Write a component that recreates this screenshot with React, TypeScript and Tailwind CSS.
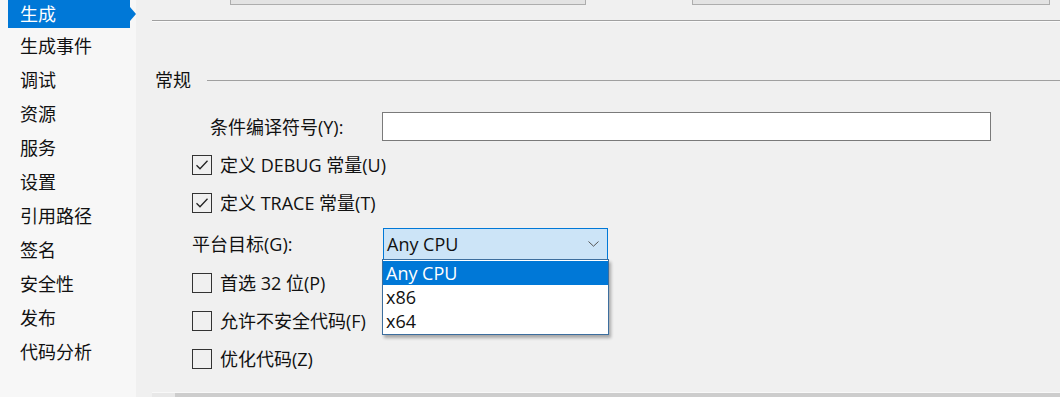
import React from "react";

const navItems = ["生成事件", "调试", "资源", "服务", "设置", "引用路径", "签名", "安全性", "发布", "代码分析"];

function CheckBox({ checked }: { checked?: boolean }) {
  return (
    <div className="w-[20px] h-[20px] border border-[#333333] bg-[#f0f0f0] flex items-center justify-center shrink-0">
      {checked && (
        <svg width="16" height="16" viewBox="0 0 16 16">
          <path d="M2.5 8.2 L6 11.7 L13.5 3.8" fill="none" stroke="#222" strokeWidth="1.3" />
        </svg>
      )}
    </div>
  );
}

function CheckRow({ label, checked, className }: { label: string; checked?: boolean; className: string }) {
  return (
    <div className={"h-[24px] flex items-center pl-[56px] " + className}>
      <CheckBox checked={checked} />
      <span className="ml-[8px]">{label}</span>
    </div>
  );
}

export default function App() {
  return (
    <div
      className="w-[1060px] h-[397px] flex overflow-hidden bg-[#f0f0f0] text-[18px] text-[#111] leading-none"
      style={{ fontFamily: '"Open Sans", "Noto Sans CJK SC", sans-serif' }}
    >
      {/* left nav */}
      <aside className="w-[136px] shrink-0 bg-[#f7f7f7] flex flex-col">
        <div className="h-[29px]">
          <div className="relative ml-[8px] w-[122px] h-[28px] bg-[#0078d7] text-white flex items-center pl-[12px]">
            生成
            <div className="absolute right-[-6px] top-[7px] w-0 h-0 border-y-[7px] border-y-transparent border-l-[6px] border-l-[#0078d7]" />
          </div>
        </div>
        {navItems.map((n) => (
          <div key={n} className="h-[34px] flex items-center pl-[20px]">
            {n}
          </div>
        ))}
      </aside>

      {/* main */}
      <main className="flex-1 flex flex-col">
        <div className="h-[5px] flex pl-[94px]">
          <div className="w-[356px] h-[5px] border-x border-b border-[#adadad] bg-[#e3e3e3]" />
          <div className="w-[358px] h-[5px] ml-[106px] border-x border-b border-[#adadad] bg-[#e3e3e3]" />
        </div>
        <div className="mt-[15px] ml-[16px] h-[2px] border-t border-[#a0a0a0] border-b border-b-[#fafafa]" />

        <div className="mt-[46px] h-[24px] flex items-center pl-[19px]">
          <span>常规</span>
          <div className="flex-1 ml-[16px] border-t border-[#a0a0a0]" />
        </div>

        <div className="mt-[20px] h-[29px] flex items-center">
          <span className="pl-[74px] w-[246px]">条件编译符号(Y):</span>
          <div className="w-[609px] h-[29px] bg-white border border-[#7a7a7a]" />
        </div>

        <CheckRow className="mt-[12px]" checked label="定义 DEBUG 常量(U)" />
        <CheckRow className="mt-[14px]" checked label="定义 TRACE 常量(T)" />

        <div className="mt-[13px] h-[32px] flex items-center">
          <span className="pl-[56px] w-[247px]">平台目标(G):</span>
          <div className="relative w-[225px] h-[32px]">
            <div className="h-full bg-[#cce4f7] border border-[#0078d7] flex items-center pl-[3px] pr-[8px]">
              <span className="flex-1">Any CPU</span>
              <svg width="11" height="6" viewBox="0 0 11 6">
                <path d="M0.5 0.5 L5.5 5.2 L10.5 0.5" fill="none" stroke="#555" strokeWidth="1" />
              </svg>
            </div>
            {/* open dropdown list */}
            <div className="absolute left-[-1px] top-[31px] w-[227px] bg-white border border-[#3c6e9e] shadow-[2px_3px_3px_rgba(0,0,0,0.3)] z-10 py-px">
              <div className="h-[24px] bg-[#0078d7] text-white flex items-center pl-[3px]">Any CPU</div>
              <div className="h-[24px] flex items-center pl-[3px]">x86</div>
              <div className="h-[24px] flex items-center pl-[3px]">x64</div>
            </div>
          </div>
        </div>

        <CheckRow className="mt-[11px]" label="首选 32 位(P)" />
        <CheckRow className="mt-[14px]" label="允许不安全代码(F)" />
        <CheckRow className="mt-[14px]" label="优化代码(Z)" />

        <div className="mt-auto h-[5px] flex pl-[16px]">
          <div className="flex-1 flex border-t border-[#f8f8f8] bg-[#e8e8e8]">
            <div className="ml-[23px] flex-1 bg-[#cdcdcd]" />
          </div>
        </div>
      </main>
    </div>
  );
}
